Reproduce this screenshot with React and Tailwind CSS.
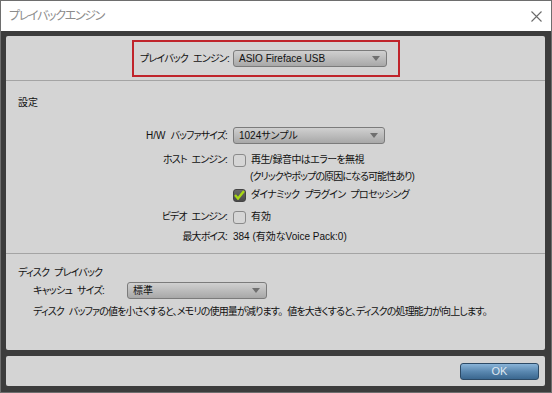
function Dropdown({ value, className }) {
  return (
    <div
      className={`h-[17px] flex items-center justify-between rounded-[3px] border border-[#7b7b7b] bg-gradient-to-b from-[#d0d0d0] to-[#a8a8a8] pl-[5px] pr-[6px] text-[10px] text-[#111] tracking-normal [word-spacing:0] ${className}`}
    >
      <span className="leading-none">{value}</span>
      <svg width="8" height="5" viewBox="0 0 8 5">
        <path d="M0 0 H8 L4 5 Z" fill="#6f6f6f" />
      </svg>
    </div>
  )
}

function Checkbox({ checked }) {
  if (checked) {
    return (
      <div className="w-[13px] h-[13px] rounded-[3px] border border-[#444] bg-gradient-to-b from-[#6a6a6a] to-[#4a4a4a] flex items-center justify-center">
        <svg width="11" height="10" viewBox="0 0 11 10">
          <path d="M1 5 L4 8.5 L10 1" stroke="#a8d814" strokeWidth="2.4" fill="none" />
        </svg>
      </div>
    )
  }
  return <div className="w-[13px] h-[13px] rounded-[3px] border border-[#8a8a8a] bg-[#d6d6d6]" />
}

function Row({ label, children, className = '' }) {
  return (
    <div className={`flex items-center ${className}`}>
      <div className="w-[222px] text-right pr-[1px] tracking-[-0.9px] [word-spacing:3px]">{label}</div>
      <div className="ml-[5px] flex items-center">{children}</div>
    </div>
  )
}

export default function App() {
  return (
    <div className="w-[552px] h-[393px] border border-[#6e6e6e] bg-[#3c3c3c] flex flex-col text-[10px] text-[#111] leading-none whitespace-nowrap [font-family:'Liberation_Sans','Noto_Sans_CJK_JP',sans-serif] [font-feature-settings:'palt']">
      {/* title bar */}
      <div className="h-[30px] bg-white flex items-center justify-between pl-[8px] pr-[9px] shrink-0">
        <span className="text-[12px] text-[#8c8c8c] tracking-[-1.3px]">プレイバックエンジン</span>
        <svg width="11" height="11" viewBox="0 0 11 11">
          <path d="M0.5 0.5 L10.5 10.5 M10.5 0.5 L0.5 10.5" stroke="#6a6a6a" strokeWidth="1.1" />
        </svg>
      </div>

      <div className="flex flex-col pl-[5px] pr-[6px] pt-[5px]">
        {/* main panel */}
        <div className="h-[314px] bg-[#d4d4d4] rounded-[2px] flex flex-col">
          {/* engine */}
          <div className="h-[44px] pt-[4px] flex">
            <div className="ml-[126px] w-[268px] h-[37px] border-2 border-[#c0242b] flex items-center">
              <span className="w-[95px] text-right tracking-[-0.8px] [word-spacing:3px]">プレイバック エンジン:</span>
              <Dropdown value="ASIO Fireface USB" className="ml-[4px] w-[154px]" />
            </div>
          </div>
          <div className="h-px bg-[#a4a4a4]" />

          {/* settings */}
          <div className="h-[172px] flex flex-col">
            <div className="h-[16px] mt-[14px] ml-[12px] flex items-center">設定</div>
            <Row label={<><span className="tracking-normal">H/W</span> バッファサイズ:</>} className="h-[17px] mt-[16px]">
              <Dropdown value="1024サンプル" className="w-[152px]" />
            </Row>
            <Row label="ホスト エンジン:" className="h-[18px] mt-[7px]">
              <Checkbox />
              <span className="ml-[5px] tracking-[-0.6px]">再生<span className="tracking-normal">/</span>録音中はエラーを無視</span>
            </Row>
            <Row label="" className="h-[16px]">
              <span className="ml-[17px] tracking-[-0.9px]">(クリックやポップの原因になる可能性あり)</span>
            </Row>
            <Row label="" className="h-[18px] mt-[1px]">
              <Checkbox checked />
              <span className="ml-[5px] tracking-[-0.7px] [word-spacing:3px]">ダイナミック プラグイン プロセッシング</span>
            </Row>
            <Row label="ビデオ エンジン:" className="h-[18px] mt-[4px]">
              <Checkbox />
              <span className="ml-[5px]">有効</span>
            </Row>
            <Row label="最大ボイス:" className="h-[16px] mt-[3px]">
              <span className="tracking-normal [word-spacing:0]">384 (有効なVoice Pack:0)</span>
            </Row>
          </div>
          <div className="h-px bg-[#a4a4a4]" />

          {/* disk playback */}
          <div className="flex flex-col">
            <div className="h-[16px] mt-[11px] ml-[12px] flex items-center tracking-[-0.8px] [word-spacing:3px]">ディスク プレイバック</div>
            <div className="h-[17px] mt-[1px] flex items-center">
              <span className="ml-[27px] w-[94px] tracking-[-0.8px] [word-spacing:3px]">キャッシュ サイズ:</span>
              <Dropdown value="標準" className="w-[140px]" />
            </div>
            <div className="h-[16px] mt-[5px] ml-[27px] flex items-center tracking-[-0.85px] [word-spacing:3px]">
              ディスク バッファの値を小さくすると、メモリの使用量が減ります。 値を大きくすると、ディスクの処理能力が向上します。
            </div>
          </div>
        </div>

        {/* button panel */}
        <div className="h-[30px] mt-[6px] bg-[#d4d4d4] rounded-[2px] flex items-start justify-end pt-[7px] pr-[6px]">
          <button className="w-[79px] h-[17px] rounded-[3px] border border-[#2c4a66] bg-gradient-to-b from-[#8ab4d8] via-[#5a88b0] to-[#3a678f] text-[#dfe8f1] text-[11px] leading-none flex items-center justify-center">
            OK
          </button>
        </div>
      </div>
    </div>
  )
}
